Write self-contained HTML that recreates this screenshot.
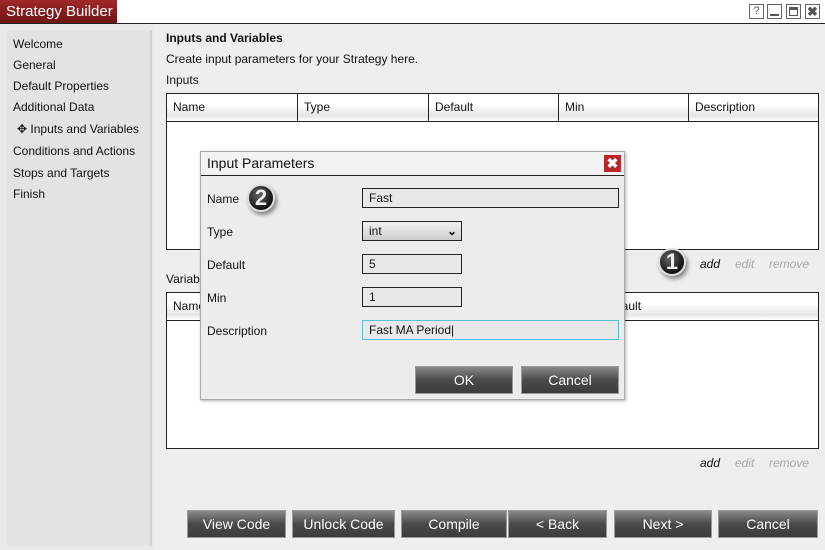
<!DOCTYPE html>
<html><head><meta charset="utf-8"><style>
*{margin:0;padding:0;box-sizing:border-box}
body{width:825px;height:550px;overflow:hidden;background:#e8e9ea;font-family:"Liberation Sans",Arial,sans-serif;font-size:12px;color:#111;position:relative}
.a{position:absolute;white-space:nowrap}
.topbar{left:0;top:0;width:825px;height:24px;background:#fff;border-bottom:1px solid #222}
.tab{left:0;top:0;width:117px;height:23px;background:linear-gradient(#a02828,#6e1414);color:#fff;font-size:15px;line-height:23px;padding-left:6px}
.wb{top:4px;width:15px;height:15px;border:1px solid #666;background:#fff;color:#555;font-size:11px;text-align:center;line-height:13px}
.side{left:7px;top:30px;width:145px;height:516px;background:#e3e3e3;border-right:2px solid #d0d0d0}
.side div{position:absolute;left:6px;font-size:12px;white-space:nowrap}
.main{left:154px;top:24px;width:671px;height:526px;background:#edeeee}
.tbl{left:166px;width:653px;height:157px;background:#fff;border:1px solid #222}
.hdr{position:absolute;left:0;top:0;right:0;height:28px;border-bottom:1px solid #222;background:linear-gradient(#fff 40%,#e6e6e6 80%,#fff)}
.hdr span{position:absolute;top:0;height:27px;line-height:27px;padding-left:6px;border-right:1px solid #222}
.lk{font-style:italic;font-size:12px}
.btn{top:510px;height:28px;background:linear-gradient(#8a8a8a,#4a4a4a 50%,#3c3c3c);border:1px solid #999;color:#fff;font-size:14px;text-align:center;line-height:26px}
.dlg{left:200px;top:151px;width:425px;height:249px;background:#ececec;border:1px solid #aaa;box-shadow:1px 1px 3px rgba(0,0,0,.3)}
.dt{position:absolute;left:0;top:0;width:423px;height:24px;border-bottom:1px solid #222;background:#f3f3f3;font-size:14px;line-height:23px;padding-left:6px}
.lbl{position:absolute;left:6px;font-size:12px}
.inp{position:absolute;left:161px;height:20px;border:1px solid #222;background:#e8e8e8;padding-left:6px;line-height:18px;font-size:12px}
.badge{width:28px;height:28px;border-radius:50%;background:radial-gradient(circle at 40% 35%,#666,#111 70%);border:2px solid #ddd;box-shadow:2px 3px 4px rgba(0,0,0,.45);color:#eee;font-weight:bold;font-size:22px;text-align:center;line-height:24px}
</style></head><body>
<div class="a topbar"></div>
<div class="a tab">Strategy Builder</div>
<div class="a wb" style="left:749px">?</div>
<div class="a wb" style="left:767px"><div style="position:absolute;left:2px;right:2px;bottom:2px;height:2px;background:#555"></div></div>
<div class="a wb" style="left:786px"><div style="position:absolute;left:2px;right:2px;top:2px;bottom:2px;border:1px solid #555;border-top-width:3px"></div></div>
<div class="a wb" style="left:805px;font-weight:bold;font-size:13px">✖</div>
<div class="a main"></div>
<div class="a side">
<div style="top:7px">Welcome</div>
<div style="top:28px">General</div>
<div style="top:49px">Default Properties</div>
<div style="top:70px">Additional Data</div>
<div style="top:92px;left:10px">✥ Inputs and Variables</div>
<div style="top:114px">Conditions and Actions</div>
<div style="top:136px">Stops and Targets</div>
<div style="top:157px">Finish</div>
</div>
<div class="a" style="left:166px;top:31px;font-weight:bold">Inputs and Variables</div>
<div class="a" style="left:166px;top:52px">Create input parameters for your Strategy here.</div>
<div class="a" style="left:166px;top:73px">Inputs</div>
<div class="a tbl" style="top:93px"><div class="hdr">
<span style="left:0;width:131px">Name</span><span style="left:131px;width:131px">Type</span><span style="left:262px;width:130px">Default</span><span style="left:392px;width:130px">Min</span><span style="left:522px;border:none">Description</span></div></div>
<div class="a badge" style="left:658px;top:248px">1</div>
<div class="a lk" style="left:700px;top:257px">add</div>
<div class="a lk" style="left:735px;top:257px;color:#aaa">edit</div>
<div class="a lk" style="left:769px;top:257px;color:#aaa">remove</div>
<div class="a" style="left:166px;top:272px">Variables</div>
<div class="a tbl" style="top:292px"><div class="hdr">
<span style="left:0;width:131px">Name</span><span style="left:131px;width:131px">Type</span><span style="left:262px;width:130px">Default</span><span style="left:430px;border:none">Default</span></div></div>
<div class="a lk" style="left:700px;top:456px">add</div>
<div class="a lk" style="left:735px;top:456px;color:#aaa">edit</div>
<div class="a lk" style="left:769px;top:456px;color:#aaa">remove</div>
<div class="a btn" style="left:187px;width:99px">View Code</div>
<div class="a btn" style="left:292px;width:103px">Unlock Code</div>
<div class="a btn" style="left:401px;width:106px">Compile</div>
<div class="a btn" style="left:508px;width:99px">&lt; Back</div>
<div class="a btn" style="left:614px;width:98px">Next &gt;</div>
<div class="a btn" style="left:718px;width:100px">Cancel</div>
<div class="a dlg">
<div class="dt">Input Parameters<div style="position:absolute;right:3px;top:3px;width:17px;height:17px;background:#b82828;color:#fff;font-weight:bold;font-size:14px;line-height:17px;text-align:center">✖</div></div>
<div class="lbl" style="top:40px">Name</div>
<div class="a badge" style="left:46px;top:32px">2</div>
<div class="inp" style="top:36px;width:257px">Fast</div>
<div class="lbl" style="top:73px">Type</div>
<div class="inp" style="top:69px;width:100px;background:linear-gradient(#f2f2f2,#ccc)">int<span style="position:absolute;right:4px;top:0;font-weight:bold">⌄</span></div>
<div class="lbl" style="top:106px">Default</div>
<div class="inp" style="top:102px;width:100px">5</div>
<div class="lbl" style="top:139px">Min</div>
<div class="inp" style="top:135px;width:100px">1</div>
<div class="lbl" style="top:172px">Description</div>
<div class="inp" style="top:168px;width:257px;border-color:#5bbfd6">Fast MA Period|</div>
<div class="a btn" style="left:214px;top:214px;width:98px">OK</div>
<div class="a btn" style="left:320px;top:214px;width:98px">Cancel</div>
</div>
</body></html>
